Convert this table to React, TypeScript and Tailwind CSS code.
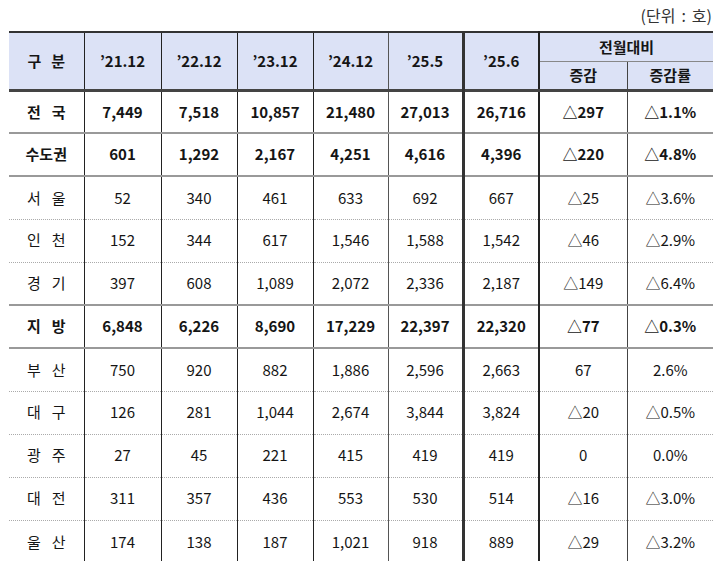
import React from "react";

type Row = { name: string[]; vals: string[]; bold?: boolean; top: "solid" | "dotted" | "header" };

const rows: Row[] = [
  { name: ["전", "국"], vals: ["7,449", "7,518", "10,857", "21,480", "27,013", "26,716", "△297", "△1.1%"], bold: true, top: "header" },
  { name: ["수도권"], vals: ["601", "1,292", "2,167", "4,251", "4,616", "4,396", "△220", "△4.8%"], bold: true, top: "solid" },
  { name: ["서", "울"], vals: ["52", "340", "461", "633", "692", "667", "△25", "△3.6%"], top: "solid" },
  { name: ["인", "천"], vals: ["152", "344", "617", "1,546", "1,588", "1,542", "△46", "△2.9%"], top: "dotted" },
  { name: ["경", "기"], vals: ["397", "608", "1,089", "2,072", "2,336", "2,187", "△149", "△6.4%"], top: "dotted" },
  { name: ["지", "방"], vals: ["6,848", "6,226", "8,690", "17,229", "22,397", "22,320", "△77", "△0.3%"], bold: true, top: "solid" },
  { name: ["부", "산"], vals: ["750", "920", "882", "1,886", "2,596", "2,663", "67", "2.6%"], top: "solid" },
  { name: ["대", "구"], vals: ["126", "281", "1,044", "2,674", "3,844", "3,824", "△20", "△0.5%"], top: "dotted" },
  { name: ["광", "주"], vals: ["27", "45", "221", "415", "419", "419", "0", "0.0%"], top: "dotted" },
  { name: ["대", "전"], vals: ["311", "357", "436", "553", "530", "514", "△16", "△3.0%"], top: "dotted" },
  { name: ["울", "산"], vals: ["174", "138", "187", "1,021", "918", "889", "△29", "△3.2%"], top: "dotted" },
];

const years = ["’21.12", "’22.12", "’23.12", "’24.12", "’25.5", "’25.6"];

// right border of each column (index 0 = 구분)
const colRight = [
  "border-r border-r-[#222]",
  "border-r border-r-[#222]",
  "border-r border-r-[#222]",
  "border-r border-r-[#222]",
  "border-r border-r-[#555]",
  "border-r-[3px] border-r-[#333]",
  "border-r-2 border-r-[#222]",
  "border-r border-r-[#444]",
  "",
];

const topCls = {
  header: "border-t-[3px] border-t-[#444]",
  solid: "border-t-2 border-t-[#999]",
  dotted: "border-t border-t-[#aaa] [border-top-style:dotted]",
};

export default function App() {
  return (
    <div
      className="w-[720px] h-[561px] overflow-hidden bg-white text-[#151515]"
      style={{ fontFamily: '"Noto Sans CJK KR", "Noto Sans", sans-serif' }}
    >
      <div className="ml-[9px] w-[704px]">
        <div className="h-[31px] flex items-center justify-end gap-[6px] pr-[1px] pb-[1px] text-[16px] text-[#333]">
          <span>(단위</span>
          <span>:</span>
          <span>호)</span>
        </div>
        <table className="table-fixed border-collapse w-[704px] text-[15px]">
          <colgroup>
            <col className="w-[75px]" />
            <col className="w-[77px]" />
            <col className="w-[76px]" />
            <col className="w-[76px]" />
            <col className="w-[75px]" />
            <col className="w-[75px]" />
            <col className="w-[76px]" />
            <col className="w-[88px]" />
            <col className="w-[86px]" />
          </colgroup>
          <thead>
            <tr className="h-[29px] bg-[#dce2f6] font-bold">
              <th rowSpan={2} className={`border-t-2 border-t-[#333] ${colRight[0]}`}>
                <div className="flex justify-center gap-[10px]">
                  <span>구</span>
                  <span>분</span>
                </div>
              </th>
              {years.map((y, i) => (
                <th key={y} rowSpan={2} className={`border-t-2 border-t-[#333] ${colRight[i + 1]}`}>
                  {y}
                </th>
              ))}
              <th colSpan={2} className="border-t-2 border-t-[#333] border-b border-b-[#888]">
                전월대비
              </th>
            </tr>
            <tr className="h-[29px] bg-[#dce2f6] font-bold">
              <th className={colRight[7]}>증감</th>
              <th>증감률</th>
            </tr>
          </thead>
          <tbody>
            {rows.map((r) => (
              <tr key={r.name.join("")} className={`h-[43px] ${r.bold ? "font-bold" : ""}`}>
                <td className={`${topCls[r.top]} ${colRight[0]} text-center`}>
                  <div className="flex justify-center gap-[11px]">
                    {r.name.map((c) => (
                      <span key={c}>{c}</span>
                    ))}
                  </div>
                </td>
                {r.vals.map((v, i) => (
                  <td key={i} className={`${topCls[r.top]} ${colRight[i + 1]} text-center`}>
                    {v}
                  </td>
                ))}
              </tr>
            ))}
          </tbody>
        </table>
      </div>
    </div>
  );
}
